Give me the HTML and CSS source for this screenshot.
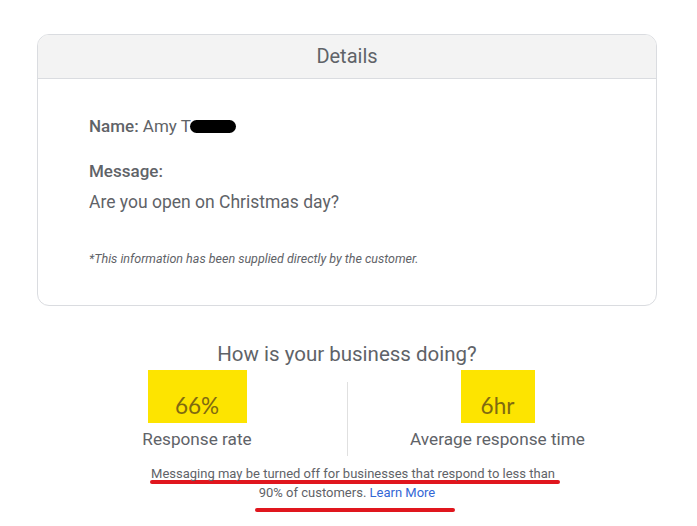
FILE: index.html
```html
<!DOCTYPE html>
<html lang="en">
<head>
    <meta charset="UTF-8">
    <title>Details</title>
    <link rel="stylesheet" href="styles.css">
</head>
<body>
    <div class="card">
        <div class="card-head">Details</div>
        <div class="card-body">
            <p class="name"><strong>Name:</strong> Amy T<span class="redact"></span></p>
            <p class="label"><strong>Message:</strong></p>
            <p class="message">Are you open on Christmas day?</p>
            <p class="note">*This information has been supplied directly by the customer.</p>
        </div>
    </div>

    <div class="stats">
        <h2>How is your business doing?</h2>
        <div class="stat-row">
            <div class="stat">
                <div class="value wide">66%</div>
                <div class="caption">Response rate</div>
            </div>
            <div class="stat">
                <div class="value">6hr</div>
                <div class="caption">Average response time</div>
            </div>
        </div>
        <div class="warning">
            <div class="line first">Messaging may be turned off for businesses that respond to less than</div>
            <div class="redline first"></div>
            <div class="line second">90% of customers. <a href="#">Learn More</a></div>
            <div class="redline second"></div>
        </div>
    </div>
</body>
</html>
```

FILE: styles.css
```css
body {
    margin: 0;
    padding: 34px 40px 0 37px;
    font-family: Roboto, "Noto Sans", sans-serif;
    color: #5f6368;
    background: #fff;
}

.card {
    width: 618px;
    border: 1px solid #dadce0;
    border-radius: 12px;
    overflow: hidden;
}

.card-head {
    background: #f3f3f3;
    border-bottom: 1px solid #dadce0;
    height: 43px;
    line-height: 42px;
    text-align: center;
    font-size: 20px;
}

.card-body {
    padding: 36px 51px 38px;
}

.card-body p {
    margin: 0;
}

.card-body strong {
    font-weight: 500;
}

.name {
    font-size: 17px;
    line-height: 22px;
}

.redact {
    display: inline-block;
    width: 46px;
    height: 13px;
    margin-left: -1px;
    background: #000;
    border-radius: 7px;
    vertical-align: -1px;
}

.label {
    margin-top: 23px !important;
    font-size: 17px;
    line-height: 22px;
}

.message {
    margin-top: 9px !important;
    font-size: 17.5px;
    line-height: 22px;
}

.note {
    margin-top: 38px !important;
    font-size: 12.5px;
    font-style: italic;
    line-height: 16px;
}

.stats {
    width: 600px;
    margin-left: 10px;
    text-align: center;
}

.stats h2 {
    margin: 36px 0 0;
    font-size: 20.5px;
    font-weight: 400;
    line-height: 24px;
    color: #5f6368;
}

.stat-row {
    display: grid;
    grid-template-columns: 1fr 1fr;
    margin-top: 4px;
}

.stat {
    display: flex;
    flex-direction: column;
    align-items: center;
}

.stat + .stat {
    border-left: 1px solid #e0e0e0;
    margin-top: 12px;
}

.stat + .stat .value {
    margin-top: -12px;
}

.value {
    width: 74px;
    height: 53px;
    box-sizing: border-box;
    padding-top: 23px;
    background: #fde400;
    font-family: Lato, sans-serif;
    font-size: 22.5px;
    line-height: 26px;
    color: #806a10;
}

.value.wide {
    width: 99px;
}

.caption {
    margin-top: 5px;
    font-size: 17.2px;
    line-height: 22px;
    padding-bottom: 6px;
}

.warning {
    margin-top: 9px;
    font-size: 13px;
    line-height: 18px;
    text-align: left;
}

.line {
    text-align: center;
}

.line.first {
    margin-left: 12px;
}

.line.second {
    margin-left: 0;
}

.warning a {
    color: #3367d6;
    text-decoration: none;
}

.redline {
    height: 4px;
    background: #e0161e;
    border-radius: 2px;
}

.redline.first {
    width: 410px;
    margin: -3px 0 0 103px;
}

.redline.second {
    width: 200px;
    margin: 6px 0 0 208px;
}
```
